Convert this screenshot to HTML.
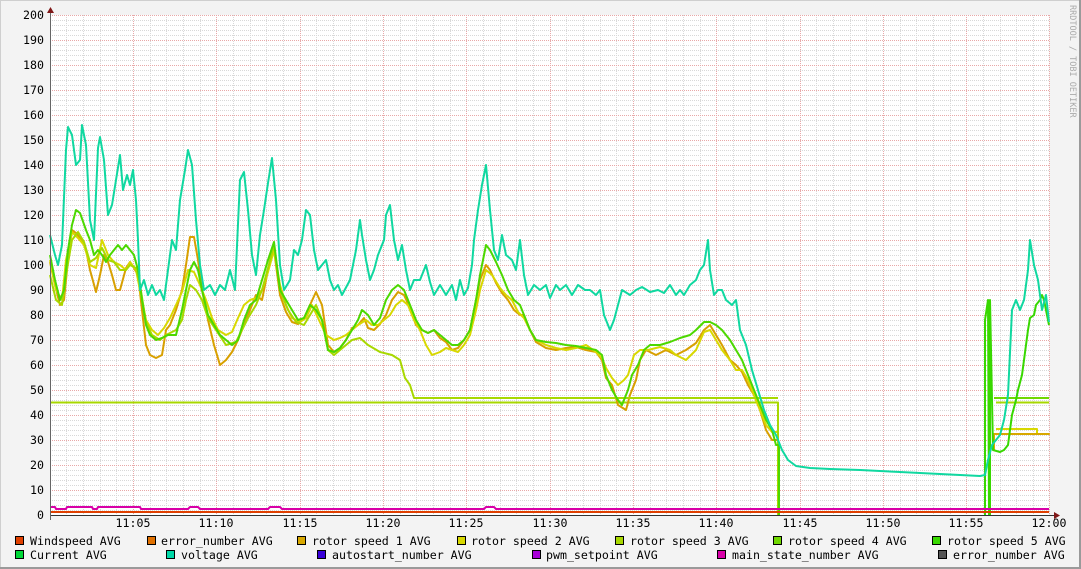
<!DOCTYPE html>
<html><head><meta charset="utf-8"><style>
html,body{margin:0;padding:0;background:#f3f3f3}
svg{display:block}
text{font-family:"DejaVu Sans Mono","Liberation Mono",monospace;font-size:11.6px;fill:#000}
</style></head><body>
<svg width="1081" height="569" viewBox="0 0 1081 569" xmlns="http://www.w3.org/2000/svg">
<defs>
<pattern id="hmin" x="0" y="0" width="2" height="5" patternUnits="userSpaceOnUse"><rect x="0" y="0" width="1" height="1" fill="#d4d4d4"/></pattern>
</defs>
<rect x="0" y="0" width="1081" height="569" fill="#f3f3f3"/>
<rect x="0.5" y="0.5" width="1079" height="567" fill="none" stroke="#cfcfcf"/>
<line x1="0" y1="568" x2="1081" y2="568" stroke="#9a9a9a" stroke-width="2"/>
<line x1="1080" y1="0" x2="1080" y2="569" stroke="#9a9a9a" stroke-width="2"/>
<rect x="50" y="15" width="999" height="500" fill="#fff"/>
<g id="grid" stroke-width="1" shape-rendering="crispEdges">
<g stroke="#d8d8d8" stroke-dasharray="1,1">
<path d="M50 20.5H1049M50 25.5H1049M50 30.5H1049M50 35.5H1049M50 45.5H1049M50 50.5H1049M50 55.5H1049M50 60.5H1049M50 70.5H1049M50 75.5H1049M50 80.5H1049M50 85.5H1049M50 95.5H1049M50 100.5H1049M50 105.5H1049M50 110.5H1049M50 120.5H1049M50 125.5H1049M50 130.5H1049M50 135.5H1049M50 145.5H1049M50 150.5H1049M50 155.5H1049M50 160.5H1049M50 170.5H1049M50 175.5H1049M50 180.5H1049M50 185.5H1049M50 195.5H1049M50 200.5H1049M50 205.5H1049M50 210.5H1049M50 220.5H1049M50 225.5H1049M50 230.5H1049M50 235.5H1049M50 245.5H1049M50 250.5H1049M50 255.5H1049M50 260.5H1049M50 270.5H1049M50 275.5H1049M50 280.5H1049M50 285.5H1049M50 295.5H1049M50 300.5H1049M50 305.5H1049M50 310.5H1049M50 320.5H1049M50 325.5H1049M50 330.5H1049M50 335.5H1049M50 345.5H1049M50 350.5H1049M50 355.5H1049M50 360.5H1049M50 370.5H1049M50 375.5H1049M50 380.5H1049M50 385.5H1049M50 395.5H1049M50 400.5H1049M50 405.5H1049M50 410.5H1049M50 420.5H1049M50 425.5H1049M50 430.5H1049M50 435.5H1049M50 445.5H1049M50 450.5H1049M50 455.5H1049M50 460.5H1049M50 470.5H1049M50 475.5H1049M50 480.5H1049M50 485.5H1049M50 495.5H1049M50 500.5H1049M50 505.5H1049M50 510.5H1049"/>
<path d="M66.5 15V515M83.5 15V515M100.5 15V515M116.5 15V515M150.5 15V515M166.5 15V515M183.5 15V515M200.5 15V515M233.5 15V515M250.5 15V515M266.5 15V515M283.5 15V515M316.5 15V515M333.5 15V515M350.5 15V515M366.5 15V515M400.5 15V515M416.5 15V515M433.5 15V515M450.5 15V515M483.5 15V515M500.5 15V515M516.5 15V515M533.5 15V515M566.5 15V515M583.5 15V515M600.5 15V515M616.5 15V515M650.5 15V515M666.5 15V515M683.5 15V515M700.5 15V515M733.5 15V515M750.5 15V515M766.5 15V515M783.5 15V515M816.5 15V515M833.5 15V515M850.5 15V515M866.5 15V515M900.5 15V515M916.5 15V515M933.5 15V515M950.5 15V515M983.5 15V515M1000.5 15V515M1016.5 15V515M1033.5 15V515"/>
</g>
<g stroke="#e8a8a8" stroke-dasharray="1,1">
<path d="M50 15.5H1049M50 40.5H1049M50 65.5H1049M50 90.5H1049M50 115.5H1049M50 140.5H1049M50 165.5H1049M50 190.5H1049M50 215.5H1049M50 240.5H1049M50 265.5H1049M50 290.5H1049M50 315.5H1049M50 340.5H1049M50 365.5H1049M50 390.5H1049M50 415.5H1049M50 440.5H1049M50 465.5H1049M50 490.5H1049"/>
<path d="M133.5 15V515M216.5 15V515M300.5 15V515M383.5 15V515M466.5 15V515M550.5 15V515M633.5 15V515M716.5 15V515M800.5 15V515M883.5 15V515M966.5 15V515M1049.5 15V515"/>
</g>
</g>
<g fill="none" stroke-width="2" stroke-linejoin="round">
<!-- flat lines -->
<polyline stroke="#a8d800" points="50,402.5 778,402.5 778,515"/>
<polyline stroke="#a8d800" points="996,402.5 1049,402.5"/>
<polyline stroke="#70d800" points="994,398 1049,398"/>
<polyline stroke="#d8d800" points="996,429 1037,429 1037,434 1049,434"/>
<polyline stroke="#d8a800" points="994,434 1037,434 1049,434 994,434 994,450"/>
<!-- orange rotor1 -->
<polyline stroke="#d8a000" points="50,262 55,285 60,305 64,300 68,260 72,230 76,233 82,240 86,250 90,270 96,292 100,275 104,255 108,262 112,275 116,290 120,290 126,268 130,262 134,268 138,275 142,310 146,345 150,355 156,358 162,355 166,330 170,325 176,310 182,290 186,265 190,237 194,237 198,260 202,290 208,320 214,345 220,365 226,360 232,352 238,340 244,325 250,310 256,295 262,300 268,270 274,250 280,295 286,312 292,322 298,324 304,318 310,305 316,292 322,305 328,345 334,352 340,348 346,340 352,328 358,325 364,318 368,328 374,330 380,324 386,315 392,300 398,292 404,295 410,308 416,325 422,330 428,333 434,330 440,338 446,342 452,350 458,348 464,340 470,330 476,300 480,280 486,265 490,270 496,283 502,293 508,300 514,310 520,315 524,315 530,330 536,342 546,348 556,350 566,348 576,347 586,350 596,352 602,360 606,378 612,385 618,405 626,410 630,395 636,380 640,360 646,350 656,355 666,350 676,355 686,350 696,343 704,330 710,325 716,335 722,345 730,360 736,365 742,372 748,385 754,395 760,410 766,430 772,440 777,440"/>
<!-- yellow rotor2 -->
<polyline stroke="#d8d800" points="50,260 56,290 62,300 66,260 72,232 78,238 84,245 90,265 96,268 102,240 108,255 114,262 120,265 126,270 130,262 136,270 140,290 146,320 152,330 158,335 164,328 170,318 176,305 182,292 188,270 194,272 200,285 206,300 212,318 218,330 226,335 232,332 238,318 244,305 250,300 256,298 262,290 268,272 274,250 280,285 286,305 292,318 300,322 306,318 312,305 318,318 326,335 334,340 340,338 346,335 352,330 358,325 366,320 372,325 378,325 384,320 390,315 396,305 402,300 408,305 414,320 420,330 426,345 432,355 440,352 446,348 452,350 458,352 464,345 470,335 476,310 480,290 486,270 492,275 500,288 506,295 512,300 518,312 524,318 530,330 536,340 546,345 556,348 566,350 576,348 586,345 596,352 602,358 606,368 612,378 618,385 624,380 628,375 634,355 640,350 648,350 660,347 670,350 676,355 686,360 696,350 704,332 710,330 716,340 722,350 730,360 736,370 742,370 748,380 754,395 760,410 766,425 772,432 777,432"/>
<!-- rotor speed 3 -->
<polyline stroke="#a8d800" points="50,275 56,300 62,305 66,275 72,240 78,232 84,242 90,262 96,258 102,248 108,260 114,262 120,270 126,270 130,265 136,268 140,285 146,322 152,335 160,340 166,335 176,330 182,320 186,300 190,285 196,290 202,300 208,318 216,330 226,345 236,342 242,330 248,318 256,305 262,290 268,268 274,245 280,290 288,310 296,322 304,325 310,315 316,305 322,320 328,350 334,355 340,350 346,345 352,340 360,338 368,345 380,352 392,355 400,360 405,378 410,385 414,398 778,398"/>
<!-- rotor speed 4 / 5 / current green -->
<polyline stroke="#4cd800" points="50,255 55,280 60,300 64,290 68,250 72,225 76,210 80,213 86,230 90,240 94,255 98,250 102,255 106,262 110,255 114,250 118,245 122,250 126,245 130,250 134,255 138,270 142,300 146,325 150,335 156,340 162,338 168,335 176,335 182,310 186,290 190,270 194,262 198,270 202,290 208,315 214,325 220,335 226,340 232,345 238,340 244,320 250,305 256,300 262,280 268,260 274,242 280,290 286,300 292,310 298,320 304,318 310,305 316,310 322,320 328,350 334,352 340,348 346,340 352,330 358,320 362,310 368,315 374,325 380,318 386,300 392,290 398,285 404,290 410,305 416,320 422,330 428,333 434,330 440,335 446,340 452,345 458,345 464,340 470,330 476,300 480,275 486,245 490,250 496,262 502,275 508,290 514,300 520,305 524,315 530,330 536,340 546,342 556,343 566,345 576,346 586,348 596,350 602,355 606,375 612,390 618,400 622,405 628,390 632,375 638,365 644,350 650,345 660,345 670,342 680,338 690,335 696,330 704,322 710,322 716,325 722,330 730,340 736,350 742,360 748,375 754,390 760,405 766,420 772,430 776,445 779,445 779,515"/>
<polyline stroke="#38d800" points="985,515 985,320 988,300 989,515"/>
<polyline stroke="#38d800" points="990,515 990,300 991,350 993,450 1000,452 1004,450 1008,445 1010,430 1012,415 1016,400 1018,390 1022,375 1024,360 1026,345 1028,330 1030,318 1034,315 1036,305 1040,300 1042,295 1044,300 1046,310 1049,325"/>
<!-- voltage -->
<polyline stroke="#10d8a0" points="50,235 55,255 58,265 62,245 66,150 68,127 72,135 76,165 80,160 82,125 86,145 90,220 94,240 98,148 100,137 104,160 108,215 112,205 116,180 120,155 123,190 127,175 130,185 133,170 136,200 138,240 140,290 144,280 148,295 152,285 156,295 160,290 164,300 168,270 172,240 176,250 180,200 185,170 188,150 192,165 196,220 200,265 204,290 210,285 215,295 220,285 225,290 230,270 235,290 240,180 244,172 248,210 252,255 256,275 260,235 264,210 268,183 272,158 276,200 280,265 284,290 290,280 294,250 298,255 302,240 306,210 310,215 314,250 318,270 322,265 326,260 330,280 334,290 338,285 342,295 350,280 356,250 360,220 362,235 366,260 370,280 374,270 378,255 384,240 386,215 390,205 394,240 398,260 402,245 406,270 410,290 414,280 420,280 426,265 430,282 434,295 440,285 446,295 452,285 456,300 460,280 464,295 468,288 472,265 474,240 478,210 482,185 486,165 490,210 494,250 498,260 502,235 506,255 512,260 516,270 520,240 524,275 528,295 534,285 540,290 546,285 550,298 556,285 560,290 566,285 572,295 578,285 585,290 590,290 596,295 600,290 604,315 610,330 614,320 618,305 622,290 630,295 636,290 642,287 650,292 658,290 664,293 670,285 676,295 680,290 684,295 690,285 696,280 700,270 704,265 708,240 710,270 714,295 718,290 722,290 726,300 732,305 736,300 740,330 746,345 752,370 758,390 764,410 770,425 776,435 782,450 788,460 796,466 810,468 830,469 860,470 900,472 940,474 980,476 985,475 988,460 992,445 996,440 1000,435 1004,420 1008,395 1012,310 1016,300 1020,310 1024,300 1028,270 1030,240 1034,265 1038,280 1042,310 1046,295 1049,322"/>
<!-- bottom lines -->
<polyline stroke="#e04000" points="50,512 1049,512"/>
<polyline stroke="#d800a8" points="50,507 55,507 56,509 66,509 67,507 92,507 93,509 97,509 98,507 140,507 141,509 188,509 190,507 198,507 200,509 268,509 270,507 280,507 282,509 484,509 486,507 494,507 496,509 1049,509"/>
</g>
<line x1="50" y1="515.5" x2="1055" y2="515.5" stroke="#333" stroke-width="1"/>
<line x1="50.5" y1="10" x2="50.5" y2="520" stroke="#666" stroke-width="1"/>
<polygon points="47,13 54,13 50.5,7" fill="#801818"/>
<polygon points="1054,512 1054,519 1060,515.5" fill="#801818"/>
<g text-anchor="end">
<text x="44" y="19">200</text><text x="44" y="44">190</text><text x="44" y="69">180</text><text x="44" y="94">170</text><text x="44" y="119">160</text><text x="44" y="144">150</text><text x="44" y="169">140</text><text x="44" y="194">130</text><text x="44" y="219">120</text><text x="44" y="244">110</text><text x="44" y="269">100</text><text x="44" y="294">90</text><text x="44" y="319">80</text><text x="44" y="344">70</text><text x="44" y="369">60</text><text x="44" y="394">50</text><text x="44" y="419">40</text><text x="44" y="444">30</text><text x="44" y="469">20</text><text x="44" y="494">10</text><text x="44" y="519">0</text>
</g>
<g text-anchor="middle">
<text x="133" y="527">11:05</text><text x="216" y="527">11:10</text><text x="300" y="527">11:15</text><text x="383" y="527">11:20</text><text x="466" y="527">11:25</text><text x="550" y="527">11:30</text><text x="633" y="527">11:35</text><text x="716" y="527">11:40</text><text x="800" y="527">11:45</text><text x="883" y="527">11:50</text><text x="966" y="527">11:55</text><text x="1049" y="527">12:00</text>
</g>
<text transform="translate(1070,5) rotate(90)" style="font-size:8.5px;fill:#aaa">RRDTOOL / TOBI OETIKER</text>
<g stroke="#000" stroke-width="1">
<rect x="15.5" y="536.5" width="8" height="8" fill="#e04000"/>
<rect x="147.5" y="536.5" width="8" height="8" fill="#e07000"/>
<rect x="297.5" y="536.5" width="8" height="8" fill="#d8a800"/>
<rect x="457.5" y="536.5" width="8" height="8" fill="#d8d800"/>
<rect x="615.5" y="536.5" width="8" height="8" fill="#a8d800"/>
<rect x="773.5" y="536.5" width="8" height="8" fill="#70d800"/>
<rect x="932.5" y="536.5" width="8" height="8" fill="#38d800"/>
<rect x="15.5" y="550.5" width="8" height="8" fill="#00d838"/>
<rect x="166.5" y="550.5" width="8" height="8" fill="#00d8a8"/>
<rect x="317.5" y="550.5" width="8" height="8" fill="#3800d8"/>
<rect x="532.5" y="550.5" width="8" height="8" fill="#a800d8"/>
<rect x="717.5" y="550.5" width="8" height="8" fill="#d800a8"/>
<rect x="938.5" y="550.5" width="8" height="8" fill="#555555"/>
</g>
<text x="30" y="545">Windspeed AVG</text>
<text x="161" y="545">error_number AVG</text>
<text x="312" y="545">rotor speed 1 AVG</text>
<text x="471" y="545">rotor speed 2 AVG</text>
<text x="630" y="545">rotor speed 3 AVG</text>
<text x="788" y="545">rotor speed 4 AVG</text>
<text x="947" y="545">rotor speed 5 AVG</text>
<text x="30" y="559">Current AVG</text>
<text x="181" y="559">voltage AVG</text>
<text x="332" y="559">autostart_number AVG</text>
<text x="546" y="559">pwm_setpoint AVG</text>
<text x="732" y="559">main_state_number AVG</text>
<text x="953" y="559">error_number AVG</text>
</svg>
</body></html>
